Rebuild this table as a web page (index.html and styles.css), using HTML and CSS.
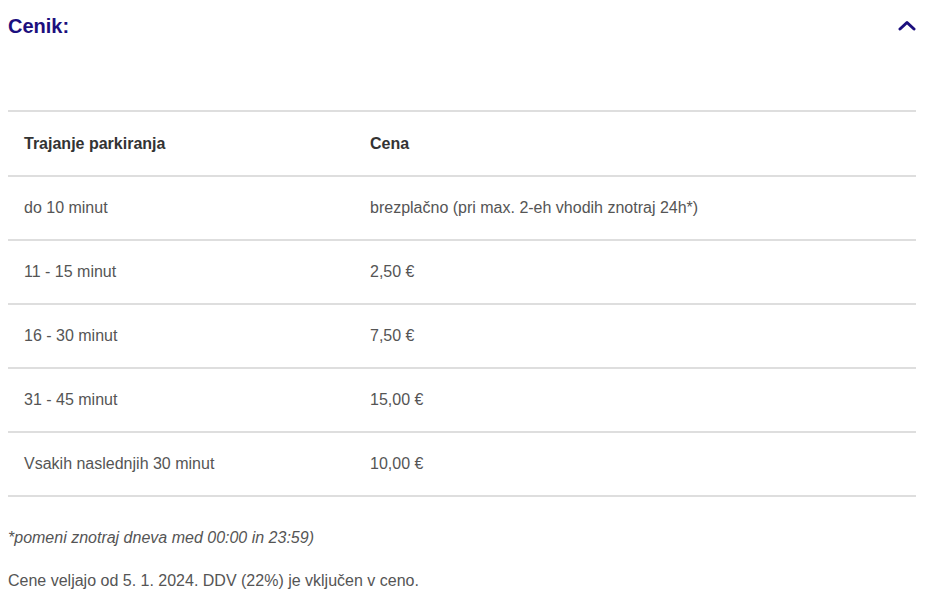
FILE: index.html
```html
<!DOCTYPE html>
<html lang="sl">
<head>
<meta charset="utf-8">
<title>Cenik</title>
<link rel="stylesheet" href="styles.css">
</head>
<body>
<section class="pricing">
  <div class="pricing-head">
    <h2 class="pricing-title">Cenik:</h2>
    <svg class="chevron" width="18" height="11" viewBox="0 0 18 11" aria-hidden="true"><path d="M2 9 L9 2.5 L16 9" fill="none" stroke="#1c0f7e" stroke-width="3" stroke-linecap="round" stroke-linejoin="round"/></svg>
  </div>
  <div class="price-table">
    <div class="row row-head"><div class="cell">Trajanje parkiranja</div><div class="cell">Cena</div></div>
    <div class="row"><div class="cell">do 10 minut</div><div class="cell">brezplačno (pri max. 2-eh vhodih znotraj 24h*)</div></div>
    <div class="row"><div class="cell">11 - 15 minut</div><div class="cell">2,50 €</div></div>
    <div class="row"><div class="cell">16 - 30 minut</div><div class="cell">7,50 €</div></div>
    <div class="row"><div class="cell">31 - 45 minut</div><div class="cell">15,00 €</div></div>
    <div class="row"><div class="cell">Vsakih naslednjih 30 minut</div><div class="cell">10,00 €</div></div>
  </div>
  <p class="note">*pomeni znotraj dneva med 00:00 in 23:59)</p>
  <p class="valid">Cene veljajo od 5. 1. 2024. DDV (22%) je vključen v ceno.</p>
</section>
</body>
</html>
```
FILE: styles.css
```css
html, body {
  margin: 0;
  padding: 0;
  background: #ffffff;
}
body {
  font-family: "Liberation Sans", Arial, sans-serif;
  color: #555555;
}
.pricing {
  width: 908px;
  margin-left: 8px;
}
.pricing-head {
  display: flex;
  justify-content: space-between;
  align-items: center;
  padding-top: 14px;
  height: 24px;
}
.pricing-title {
  margin: 0;
  font-size: 20px;
  line-height: 24px;
  font-weight: 700;
  color: #1c0f7e;
}
.chevron {
  display: block;
  margin-right: 0;
  margin-top: -2px;
}
.price-table {
  margin-top: 72px;
  border-top: 2px solid #dedede;
}
.row {
  display: grid;
  grid-template-columns: 362px 1fr;
  align-items: center;
  height: 62px;
  border-bottom: 2px solid #dedede;
  font-size: 16px;
}
.row-head {
  height: 63px;
  font-weight: 700;
  color: #333333;
}
.cell {
  padding-left: 16px;
}
.cell + .cell {
  padding-left: 0;
}
.note {
  margin: 32px 0 0;
  font-size: 16px;
  line-height: 18px;
  font-style: italic;
}
.valid {
  margin: 25px 0 0;
  font-size: 16px;
  line-height: 18px;
}
```
